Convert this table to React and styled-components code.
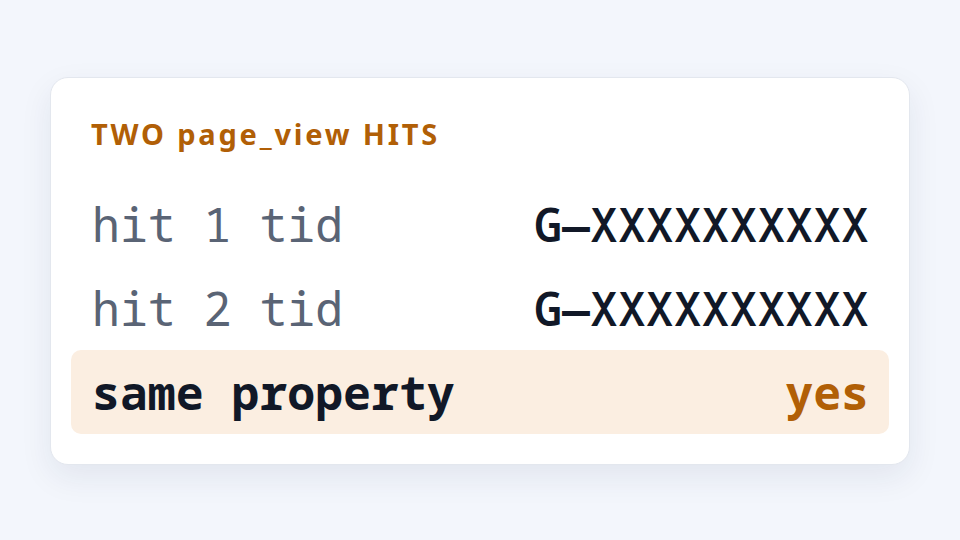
import React from "react";
import styled, { createGlobalStyle } from "styled-components";

const Global = createGlobalStyle`
  html, body { margin: 0; padding: 0; }
  body {
    width: 960px;
    height: 540px;
    background: #f3f6fc;
    font-family: "Noto Sans", sans-serif;
  }
`;

const Page = styled.div`
  width: 960px;
  height: 540px;
  display: flex;
  align-items: flex-start;
  justify-content: center;
  padding-top: 77px;
  box-sizing: border-box;
`;

const Card = styled.div`
  width: 860px;
  box-sizing: border-box;
  background: #ffffff;
  border: 1px solid #e3e7ee;
  border-radius: 18px;
  box-shadow: 0 12px 32px rgba(30, 41, 80, 0.08);
  padding: 36px 20px 30px;
  display: flex;
  flex-direction: column;
`;

const Title = styled.div`
  padding: 0 20px;
  margin-bottom: 28px;
  font-family: "Noto Sans", sans-serif;
  font-weight: 700;
  font-size: 29px;
  line-height: 40px;
  letter-spacing: 2.8px;
  color: #b15f06;
`;

const Row = styled.div`
  height: 84px;
  padding: 0 20px 0 21px;
  display: flex;
  align-items: center;
  justify-content: space-between;
  border-radius: 10px;
  background: ${(p) => (p.$highlight ? "#fbeee1" : "transparent")};
  font-family: "Noto Sans Mono", "DejaVu Sans Mono", monospace;
  font-size: 46.5px;
`;

const Label = styled.span`
  color: ${(p) => (p.$strong ? "#111827" : "#5a6475")};
  font-weight: ${(p) => (p.$strong ? 700 : 400)};
`;

const Value = styled.span`
  color: ${(p) => (p.$accent ? "#b15f06" : "#111827")};
  font-weight: ${(p) => (p.$accent ? 700 : 600)};
`;

export default function App() {
  return (
    <>
      <Global />
      <Page>
        <Card>
          <Title>TWO page_view HITS</Title>
          <Row>
            <Label>hit 1 tid</Label>
            <Value>G—XXXXXXXXXX</Value>
          </Row>
          <Row>
            <Label>hit 2 tid</Label>
            <Value>G—XXXXXXXXXX</Value>
          </Row>
          <Row $highlight>
            <Label $strong>same property</Label>
            <Value $accent>yes</Value>
          </Row>
        </Card>
      </Page>
    </>
  );
}
